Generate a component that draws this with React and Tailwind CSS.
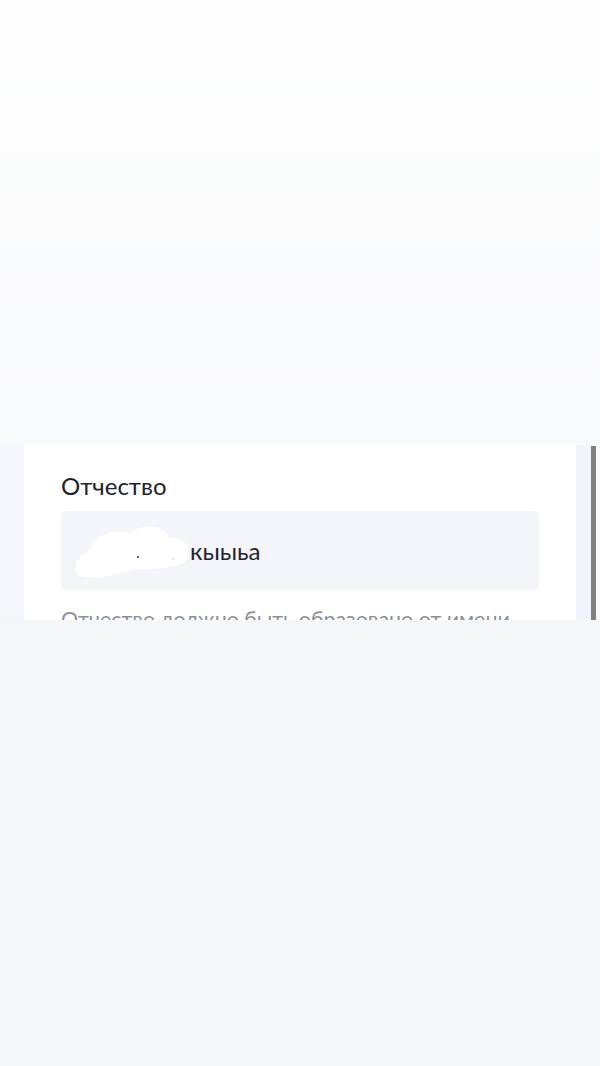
import React from "react";

export default function App() {
  return (
    <div
      className="w-[600px] h-[1066px] flex flex-col bg-[#f5f6f8]"
      style={{ fontFamily: "Lato, 'Noto Sans', sans-serif" }}
    >
      <div className="h-[445px] bg-gradient-to-b from-[#fefefe] to-[#f8f9fb]" />

      <div className="h-[175px] overflow-hidden flex bg-[#f4f5fa]">
        <div className="w-6 bg-[#f6f7fb]" />
        <div className="w-[552px] bg-white pt-[26px] pl-[37px] pr-[37px]">
          <div className="text-[24px] leading-[30px] text-[#1c2230]">Отчество</div>
          <div className="relative mt-[10px] h-[79px] rounded-md bg-[#f4f5f8] flex items-center pl-[129px]">
            <span className="text-[24px] text-[#1f2633]">кыыьа</span>
            <svg
              className="absolute left-[8px] top-[8px]"
              width="130"
              height="64"
              viewBox="0 0 130 64"
            >
              <path
                d="M22 30 C24 16 44 10 62 14 C74 4 94 6 100 18 C114 18 124 28 118 40 C112 50 88 50 66 50 C50 56 24 62 10 56 C2 50 8 38 22 30 Z"
                fill="#ffffff"
              />
              <circle cx="69" cy="38" r="1" fill="#333" />
              <circle cx="104" cy="40" r="0.8" fill="#bbb" />
            </svg>
          </div>
          <div className="mt-[15px] text-[21.4px] leading-[28px] text-[#8a8f99] whitespace-nowrap">
            Отчество должно быть образовано от имени
          </div>
        </div>
        <div className="w-[15px] bg-[#f2f3fa]" />
        <div className="w-[5px] bg-[#808080] mt-px" />
        <div className="flex-1 bg-[#fafafa]" />
      </div>

      <div className="flex-1 bg-[#f5f6f8]" />
    </div>
  );
}
